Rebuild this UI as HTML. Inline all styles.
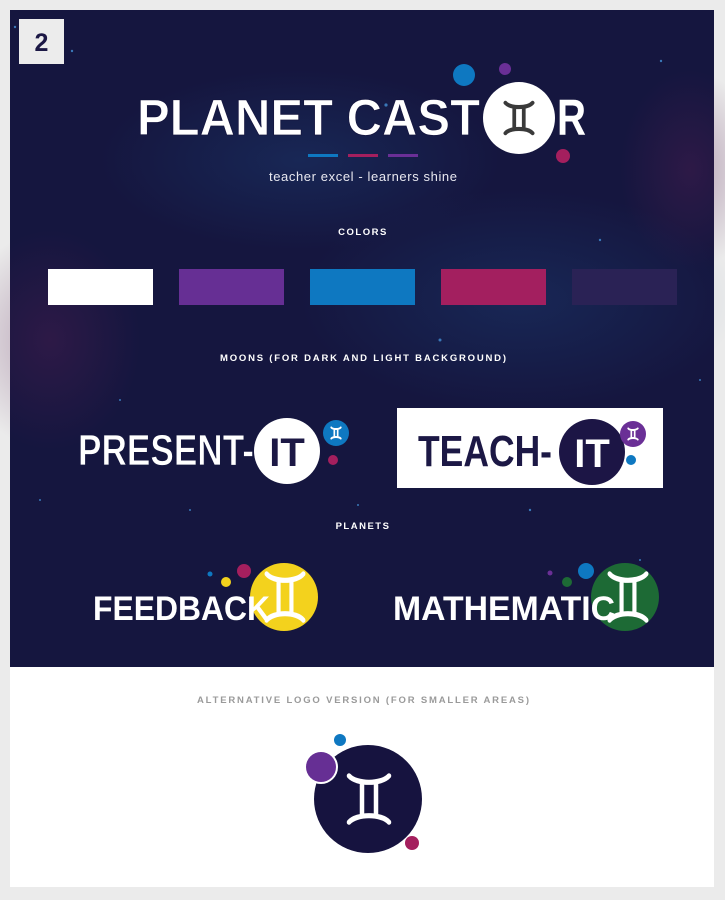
<!DOCTYPE html>
<html><head><meta charset="utf-8"><style>
html,body{margin:0;padding:0;background:#ebebeb;}
svg{display:block}
text{font-family:"Liberation Sans","DejaVu Sans",sans-serif;}
</style></head><body>
<svg width="725" height="900" viewBox="0 0 725 900" xmlns="http://www.w3.org/2000/svg">
<defs>
<radialGradient id="h1" cx="0.5" cy="0.5" r="0.5"><stop offset="0" stop-color="#5a1f55" stop-opacity="0.35"/><stop offset="1" stop-color="#5a1f55" stop-opacity="0"/></radialGradient>
<radialGradient id="h2" cx="0.5" cy="0.5" r="0.5"><stop offset="0" stop-color="#1f4f8a" stop-opacity="0.3"/><stop offset="1" stop-color="#1f4f8a" stop-opacity="0"/></radialGradient>
<g id="gem" fill="none" stroke-linecap="round">
<path d="M10 10 C25 25 75 25 90 10 M10 90 C25 75 75 75 90 90 M36 22 V78 M64 22 V78"/>
</g>
</defs>
<rect x="0" y="0" width="725" height="900" fill="#ebebeb"/>
<rect x="10" y="10" width="704" height="657" fill="#15163f"/>
<ellipse cx="50" cy="340" rx="90" ry="110" fill="url(#h1)"/>
<ellipse cx="690" cy="170" rx="70" ry="100" fill="url(#h1)"/>
<ellipse cx="520" cy="300" rx="220" ry="110" fill="url(#h2)"/>
<ellipse cx="300" cy="160" rx="200" ry="90" fill="url(#h2)"/>
<rect x="10" y="667" width="704" height="220" fill="#ffffff"/>
<g fill="#3a78b8">
<circle cx="15" cy="27" r="1.2"/><circle cx="72" cy="51" r="1.2"/><circle cx="386" cy="105" r="1.6"/><circle cx="661" cy="61" r="1.2"/><circle cx="440" cy="340" r="1.5"/><circle cx="250" cy="275" r="1.2"/><circle cx="600" cy="240" r="1.2"/><circle cx="120" cy="400" r="1"/><circle cx="530" cy="510" r="1.2"/><circle cx="358" cy="505" r="1"/><circle cx="190" cy="510" r="1"/><circle cx="700" cy="380" r="1"/><circle cx="40" cy="500" r="1"/><circle cx="640" cy="560" r="1"/>
</g>
<rect x="19" y="19" width="45" height="45" fill="#ececec"/>
<text x="41.5" y="51" text-anchor="middle" font-size="25" font-weight="bold" fill="#1c1845">2</text>
<text x="137" y="135" font-size="51" font-weight="bold" fill="#ffffff" stroke="#15163f" stroke-width="0.8" textLength="343" lengthAdjust="spacingAndGlyphs">PLANET CAST</text>
<circle cx="519" cy="118" r="36" fill="#ffffff"/>
<use href="#gem" transform="translate(502,99) scale(0.34,0.38)" stroke="#3a3a3a" stroke-width="11"/>
<text x="557" y="135" font-size="51" font-weight="bold" fill="#ffffff" textLength="29" lengthAdjust="spacingAndGlyphs">R</text>
<circle cx="464" cy="75" r="11" fill="#0e78c1"/>
<circle cx="505" cy="69" r="6" fill="#6a2f96"/>
<circle cx="563" cy="156" r="7" fill="#a41f5e"/>
<rect x="308" y="154" width="30" height="3" fill="#0e78c1"/>
<rect x="348" y="154" width="30" height="3" fill="#a41f5e"/>
<rect x="388" y="154" width="30" height="3" fill="#6a2f96"/>
<text x="363" y="181" text-anchor="middle" font-size="13" fill="#e8e8f0" textLength="188">teacher excel - learners shine</text>
<text x="363" y="235" text-anchor="middle" font-size="9.5" font-weight="bold" fill="#ffffff" letter-spacing="1.5">COLORS</text>
<rect x="48" y="269" width="105" height="36" fill="#ffffff"/>
<rect x="179" y="269" width="105" height="36" fill="#662f94"/>
<rect x="310" y="269" width="105" height="36" fill="#0e78c1"/>
<rect x="441" y="269" width="105" height="36" fill="#a31f5f"/>
<rect x="572" y="269" width="105" height="36" fill="#2a2255"/>
<text x="363" y="361" text-anchor="middle" font-size="9.5" font-weight="bold" fill="#ffffff" textLength="286">MOONS (FOR DARK AND LIGHT BACKGROUND)</text>
<text x="78" y="465" font-size="44" font-weight="bold" fill="#ffffff" stroke="#15163f" stroke-width="0.8" textLength="176" lengthAdjust="spacingAndGlyphs">PRESENT-</text>
<circle cx="287" cy="451" r="33" fill="#ffffff"/>
<text x="287" y="466" text-anchor="middle" font-size="40" font-weight="bold" fill="#1c1845">IT</text>
<circle cx="336" cy="433" r="13" fill="#0e78c1"/>
<use href="#gem" transform="translate(330,426) scale(0.12,0.14)" stroke="#ffffff" stroke-width="14"/>
<circle cx="333" cy="460" r="5" fill="#a41f5e"/>
<rect x="397" y="408" width="266" height="80" fill="#ffffff"/>
<text x="418" y="466" font-size="44" font-weight="bold" fill="#1c1845" textLength="134" lengthAdjust="spacingAndGlyphs">TEACH-</text>
<circle cx="592" cy="452" r="33" fill="#1c1545"/>
<text x="592" y="467" text-anchor="middle" font-size="40" font-weight="bold" fill="#ffffff">IT</text>
<circle cx="633" cy="434" r="13" fill="#6a2f96"/>
<use href="#gem" transform="translate(627,427) scale(0.12,0.14)" stroke="#ffffff" stroke-width="14"/>
<circle cx="631" cy="460" r="5" fill="#0e78c1"/>
<text x="363" y="529" text-anchor="middle" font-size="9.5" font-weight="bold" fill="#ffffff" letter-spacing="1.5">PLANETS</text>
<circle cx="284" cy="597" r="34" fill="#f3d21d"/>
<circle cx="244" cy="571" r="7" fill="#a41f5e"/>
<circle cx="226" cy="582" r="5" fill="#f3d21d"/>
<circle cx="210" cy="574" r="2.5" fill="#0e78c1"/>
<text x="93" y="620" font-size="34" font-weight="bold" fill="#ffffff" textLength="177" lengthAdjust="spacingAndGlyphs">FEEDBACK</text>
<use href="#gem" transform="translate(262,568) scale(0.46,0.58)" stroke="#ffffff" stroke-width="9"/>
<circle cx="625" cy="597" r="34" fill="#1d6a35"/>
<circle cx="586" cy="571" r="8" fill="#0e78c1"/>
<circle cx="567" cy="582" r="5" fill="#1d6a35"/>
<circle cx="550" cy="573" r="2.5" fill="#6a2f96"/>
<text x="393" y="620" font-size="34" font-weight="bold" fill="#ffffff" textLength="222" lengthAdjust="spacingAndGlyphs">MATHEMATIC</text>
<use href="#gem" transform="translate(605,568) scale(0.46,0.58)" stroke="#ffffff" stroke-width="9"/>
<text x="363" y="703" text-anchor="middle" font-size="9.5" font-weight="bold" fill="#9a9a9a" textLength="332">ALTERNATIVE LOGO VERSION (FOR SMALLER AREAS)</text>
<circle cx="368" cy="799" r="54" fill="#16133f"/>
<circle cx="340" cy="740" r="6" fill="#0e78c1"/>
<circle cx="321" cy="767" r="17" fill="#ffffff"/>
<circle cx="321" cy="767" r="15" fill="#662f94"/>
<circle cx="412" cy="843" r="7" fill="#a41f5e"/>
<use href="#gem" transform="translate(344,770) scale(0.5,0.58)" stroke="#ffffff" stroke-width="9"/>
</svg>
</body></html>
